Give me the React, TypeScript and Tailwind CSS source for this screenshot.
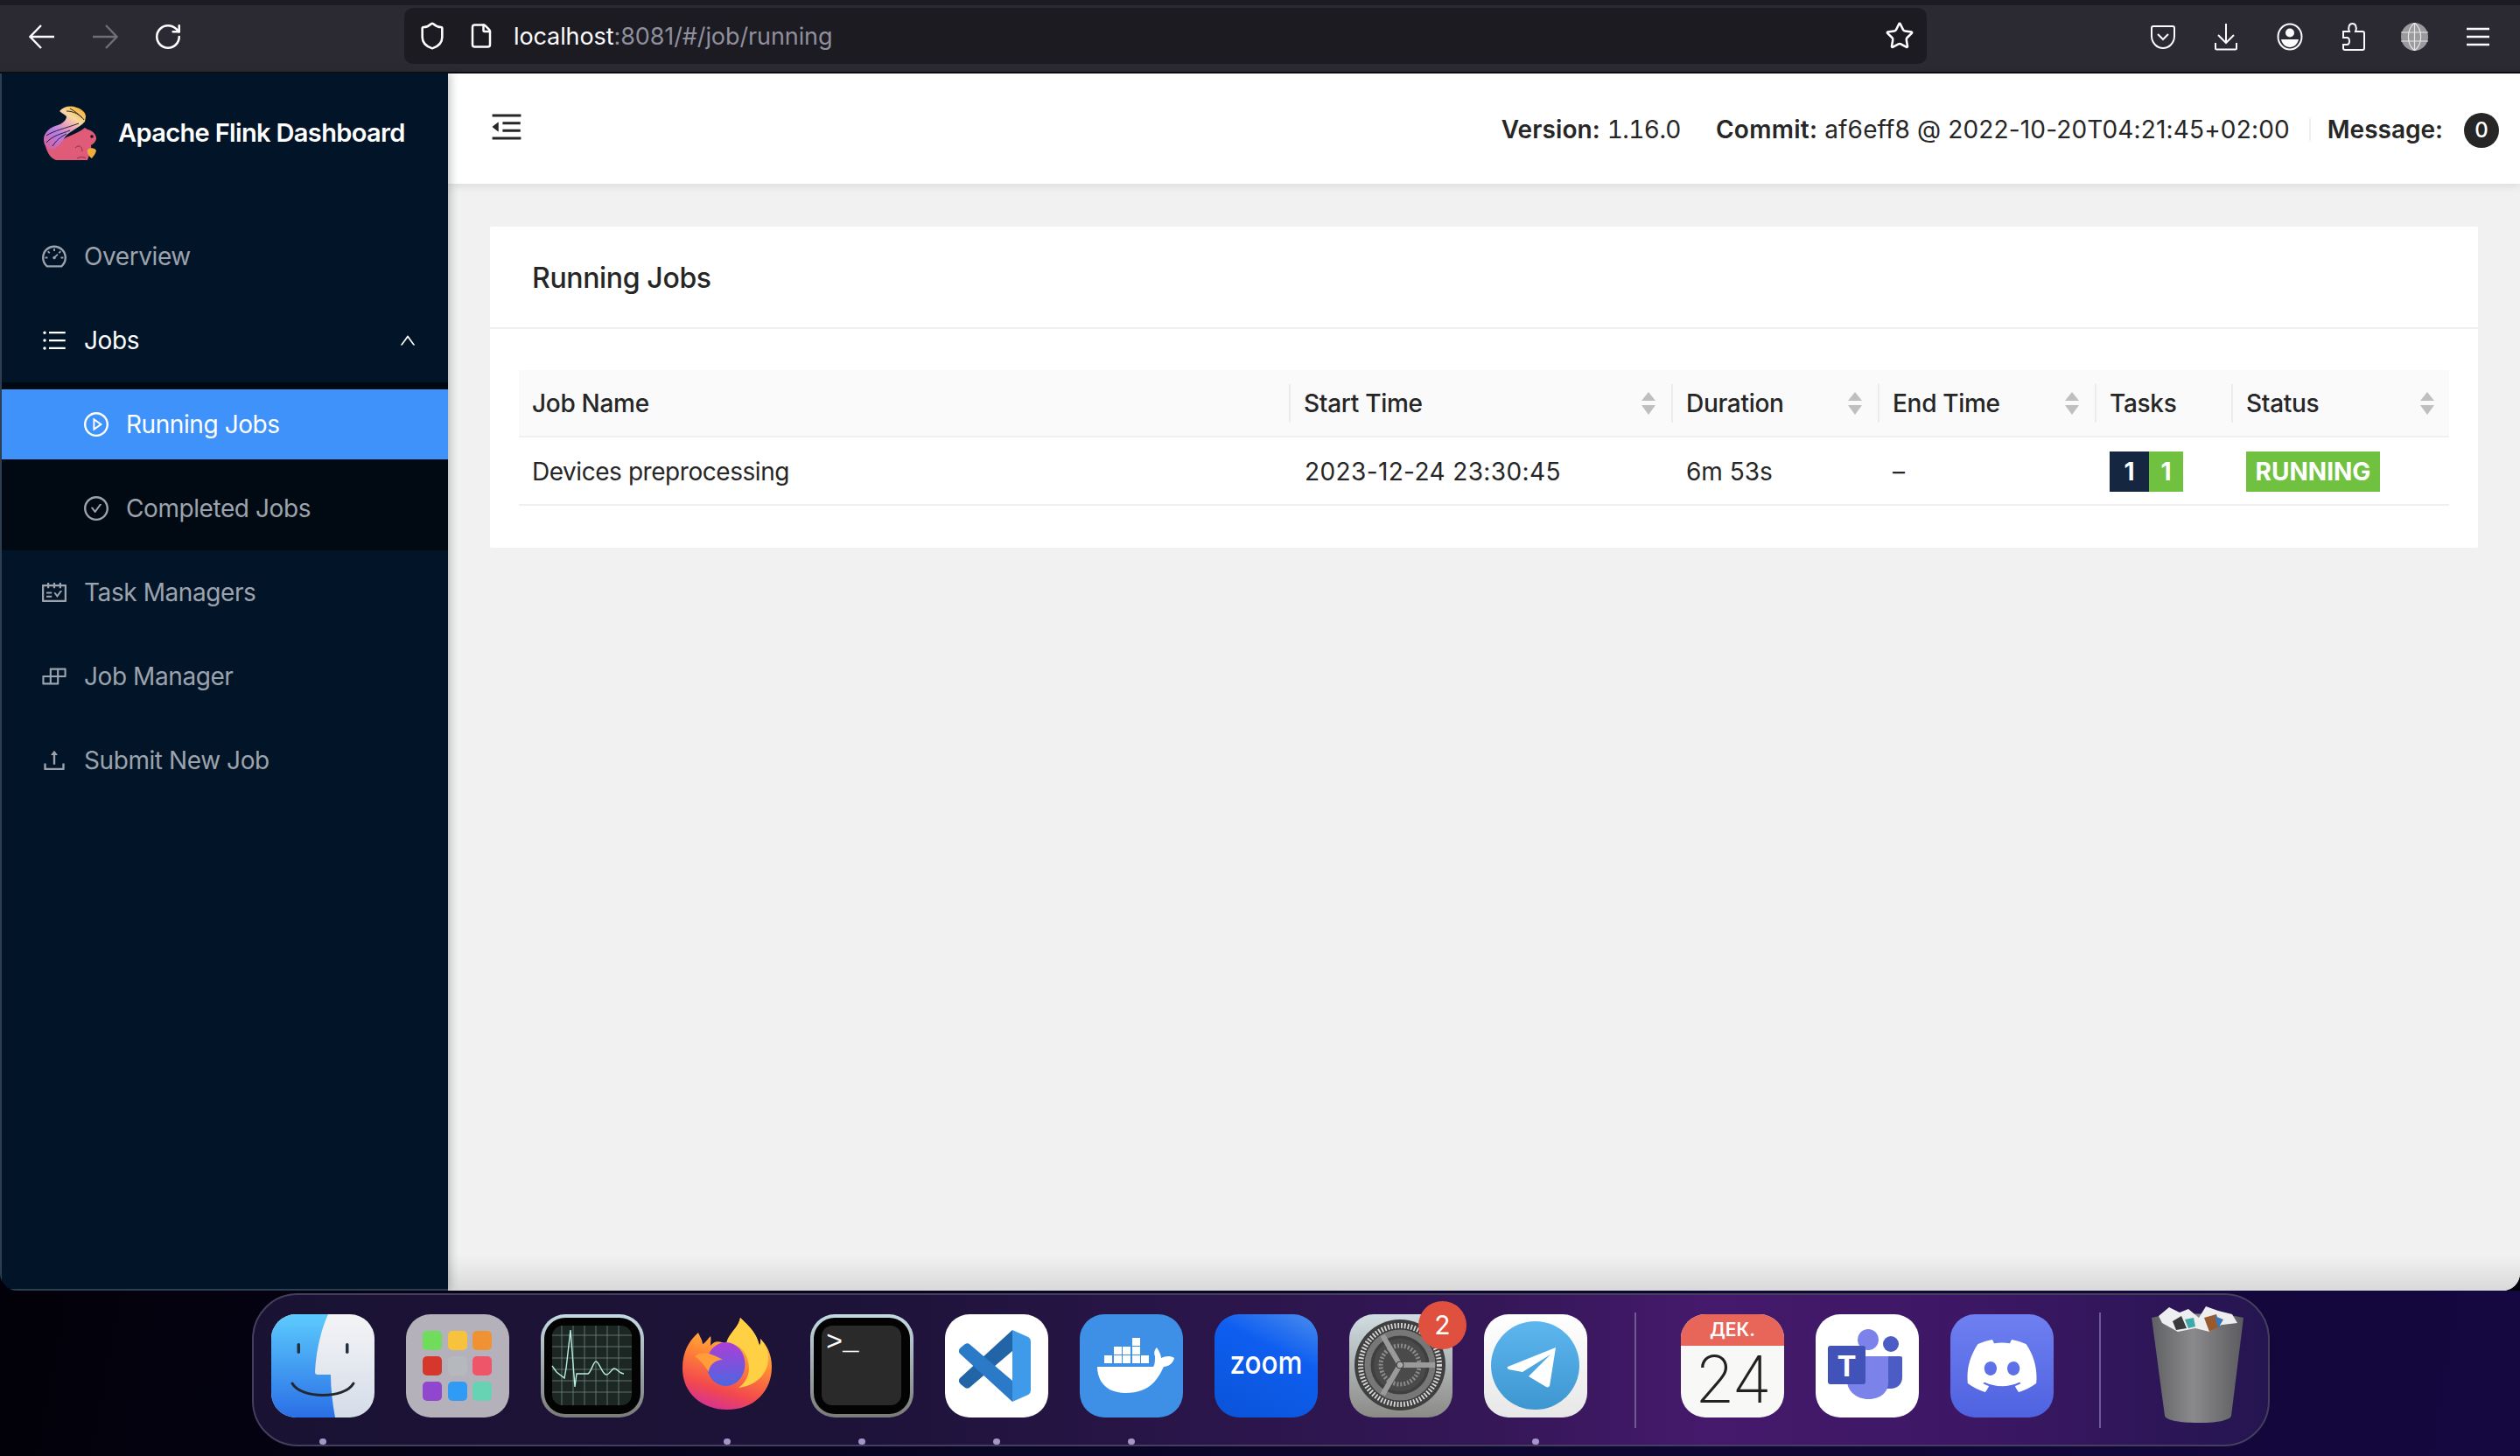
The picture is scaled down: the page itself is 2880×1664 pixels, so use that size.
import { FaDiscord } from 'react-icons/fa6'
import {
  AiOutlineBuild,
  AiOutlineCheckCircle,
  AiOutlineDashboard,
  AiOutlineMenuFold,
  AiOutlinePlayCircle,
  AiOutlineSchedule,
  AiOutlineUnorderedList,
  AiOutlineUp,
  AiOutlineUpload,
} from 'react-icons/ai'
import { File, RotateCw, Shield, Star } from 'lucide-react'

function SortArrows() {
  return (
    <svg width="16" height="26" viewBox="0 0 16 26" className="shrink-0">
      <path d="M8 0L16 10H0Z" fill="#bfbfbf" />
      <path d="M8 26L0 15H16Z" fill="#bfbfbf" />
    </svg>
  )
}

function Toolbar() {
  return (
    <div className="h-[84px] shrink-0 flex flex-col bg-[#2b2a33] border-b-2 border-[#0c0c0d]">
      <div className="h-[6px] bg-[#1c1b22]" />
      <div className="flex-1 flex items-center text-white">
        <div className="w-[462px] flex items-center pl-[33px] pb-[4px]">
          <svg width="30" height="30" viewBox="0 0 30 30" fill="none" stroke="#fbfbfe" strokeWidth="2.4">
            <path d="M1 15H29M14 2L1.5 15L14 28" />
          </svg>
          <svg width="30" height="30" viewBox="0 0 30 30" fill="none" stroke="#6f6e75" strokeWidth="2.4" className="ml-[42px]">
            <path d="M1 15H29M16 2L28.5 15L16 28" />
          </svg>
          <RotateCw size={34} strokeWidth={1.8} className="ml-[40px]" />
        </div>
        <div className="w-[1740px] h-[64px] -mt-[6px] rounded-[10px] bg-[#1c1b22] flex items-center pl-[15px] pr-[14px]">
          <Shield size={34} strokeWidth={1.8} />
          <File size={30} strokeWidth={2} className="ml-[24px]" />
          <div className="ml-[22px] pt-[3px] flex-1 text-[27px] tracking-[-0.1px]">
            <span className="text-[#fbfbfe]">localhost</span>
            <span className="text-[#8f8f9d]">:8081/#/job/running</span>
          </div>
          <Star size={34} strokeWidth={1.8} />
        </div>
        <div className="flex-1 flex items-center pl-[256px] pb-[4px]">
          <svg width="28" height="28" viewBox="0 0 28 28" fill="none" stroke="#fbfbfe" strokeWidth="2">
            <path d="M3 2H25a2 2 0 0 1 2 2V13C27 21 21 27 14 27S1 21 1 13V4A2 2 0 0 1 3 2Z" />
            <path d="M8 11L14 17L20 11" />
          </svg>
          <svg width="28" height="32" viewBox="0 0 28 32" fill="none" stroke="#fbfbfe" strokeWidth="2" className="ml-[44px]">
            <path d="M14 1V23M5 14L14 23L23 14M2 23V29a1.5 1.5 0 0 0 1.5 1.5H24.500a1.500 1.500 0 0 0 1.500-1.500V23" />
          </svg>
          <svg width="30" height="32" viewBox="0 0 30 32" className="ml-[44px]">
            <ellipse cx="15" cy="16" rx="13.500" ry="14.500" fill="none" stroke="#fbfbfe" strokeWidth="2" />
            <circle cx="15" cy="11.500" r="5" fill="#fbfbfe" />
            <path d="M5 19H25C24 24 20 28 15 28S6 24 5 19Z" fill="#fbfbfe" />
          </svg>
          <svg width="27" height="32" viewBox="0 0 27 32" fill="none" stroke="#fbfbfe" strokeWidth="2" className="ml-[44px]">
            <path d="M2 10H9C7 5 9 1 12.500 1S18 5 16 10H24a2 2 0 0 1 2 2V29a2 2 0 0 1-2 2H4a2 2 0 0 1-2-2V25H6C10 25 10 17 6 17H2Z" />
          </svg>
          <svg width="31" height="32" viewBox="0 0 31 32" className="ml-[41px]">
            <ellipse cx="15.500" cy="16" rx="15.500" ry="16" fill="#9a9a9e" />
            <path d="M0 11H31M0 21H31M15.500 0V32M15.500 0C6 8 6 24 15.500 32M15.500 0C25 8 25 24 15.500 32" fill="none" stroke="#e6e6e6" strokeWidth="1.200" />
          </svg>
          <svg width="26" height="22" viewBox="0 0 26 22" fill="none" stroke="#fbfbfe" strokeWidth="2.400" className="ml-[44px]">
            <path d="M0 2H26M0 11H26M0 20H26" />
          </svg>
        </div>
      </div>
    </div>
  )
}

function NavItem({ icon, label, sub, active, light, chevron }: { icon: React.ReactNode; label: string; sub?: boolean; active?: boolean; light?: boolean; chevron?: boolean }) {
  return (
    <div
      className={
        'h-[80px] flex items-center gap-[20px] text-[28px] tracking-[-0.42px] ' +
        (sub ? 'pl-[94px] ' : 'pl-[46px] ') +
        (active ? 'bg-[#3e92f9] text-white' : light ? 'text-white' : 'text-[#9ca3ad]')
      }
    >
      <span className="w-[28px] flex justify-center text-[32px] [&>svg]:shrink-0">{icon}</span>
      <span className="flex-1">{label}</span>
      {chevron && <AiOutlineUp size={22} className="mr-[35px]" />}
    </div>
  )
}

function Squirrel() {
  return (
    <svg width="60" height="62" viewBox="0 0 60 62">
      <defs>
        <linearGradient id="sqTail" x1="0.800" y1="0" x2="0.100" y2="1">
          <stop offset="0" stopColor="#f6b436" />
          <stop offset="0.220" stopColor="#f7d8a0" />
          <stop offset="0.420" stopColor="#e9a0c0" />
          <stop offset="0.650" stopColor="#b57be6" />
          <stop offset="1" stopColor="#d8609a" />
        </linearGradient>
      </defs>
      <path d="M47 25L50 27C56 28 60 33 60 37C60 41 56 44 54 45C55 50 52 56 50 62H14C8 60 4 54 2 46C8 48 14 46 18 42C24 34 36 34 47 25Z" fill="#e05b77" />
      <path d="M18 6C22 1 30-1 38 2C44 4 48 8 48 12L47 18C40 26 30 28 24 36C20 42 16 48 10 50C4 50 0 46 0 38C0 30 8 24 16 22C22 20 26 16 26 12C24 10 20 8 18 6Z" fill="url(#sqTail)" />
      <path d="M3 34C12 28 24 26 40 20M3 42C10 34 20 32 30 28M26 6C34 6 42 10 46 16M30 3C36 6 40 10 44 14M10 46C14 40 18 36 26 32" stroke="#12131f" strokeWidth="0.900" fill="none" />
      <path d="M36 48C40 44 44 46 44 52M38 60C42 58 46 58 48 60" stroke="#8a2d4a" strokeWidth="1" fill="none" />
      <circle cx="55" cy="35" r="1.800" fill="#21131f" />
      <path d="M50 50C53 47 59 48 60 51C59 56 56 58 55 60C52 58 49 54 50 50Z" fill="#f0ae3c" />
    </svg>
  )
}

function Sidebar() {
  return (
    <aside className="w-[512px] shrink-0 flex flex-col bg-[#021427] border-l-2 border-b-2 border-[#2c3e50] shadow-[2px_0_10px_rgba(29,35,41,0.3)] z-10">
      <div className="h-[128px] flex items-center pl-[48px] pt-[8px] gap-[26px]">
        <Squirrel />
        <span className="text-[29px] font-semibold text-white -ml-[1px] tracking-[-0.65px]">Apache Flink Dashboard</span>
      </div>
      <nav className="pt-[41px] flex flex-col">
        <NavItem icon={<AiOutlineDashboard />} label="Overview" />
        <div className="h-[16px]" />
        <NavItem icon={<AiOutlineUnorderedList />} label="Jobs" light chevron />
        <div className="mt-[8px] py-[8px] bg-[#010a13] flex flex-col gap-[16px]">
          <NavItem icon={<AiOutlinePlayCircle />} label="Running Jobs" sub active />
          <NavItem icon={<AiOutlineCheckCircle />} label="Completed Jobs" sub />
        </div>
        <div className="mt-[8px] flex flex-col gap-[16px]">
          <NavItem icon={<AiOutlineSchedule />} label="Task Managers" />
          <NavItem icon={<AiOutlineBuild />} label="Job Manager" />
          <NavItem icon={<AiOutlineUpload />} label="Submit New Job" />
        </div>
      </nav>
    </aside>
  )
}

function Header() {
  return (
    <header className="h-[126px] shrink-0 bg-white shadow-[0_2px_10px_rgba(0,0,0,0.1)] z-[5] flex items-center pl-[46px] pr-[24px] text-[28px] text-[#262626]">
      <AiOutlineMenuFold size={42} className="mb-[4px]" />
      <div className="flex-1" />
      <div className="flex items-center pt-[2px]">
        <b className="font-semibold tracking-[0.1px]">Version:</b>
        <span className="ml-[8px] tabular-nums tracking-[-0.6px]">1.16.0</span>
        <b className="font-semibold tracking-[0.3px] ml-[40px]">Commit:</b>
        <span className="ml-[8px] tracking-[0.15px]">af6eff8 @ 2022-10-20T04:21:45+02:00</span>
        <div className="w-[2px] h-[26px] bg-[#f0f0f0] ml-[22px] mr-[19px]" />
        <b className="font-semibold">Message:</b>
        <span className="ml-[24px] mt-[2px] w-[40px] h-[40px] rounded-full bg-[#262626] text-white flex items-center justify-center text-[24px] font-medium">0</span>
      </div>
    </header>
  )
}

function HeadCell({ label, sort, first }: { label: string; sort?: boolean; first?: boolean }) {
  return (
    <div className="flex items-center h-[44px]">
      {!first && <div className="w-[2px] h-[44px] bg-[#ececec]" />}
      <span className="flex-1 text-[28px] font-medium tracking-[-0.3px] text-[#262626] pl-[15px]">{label}</span>
      {sort && <span className="pr-[18px]"><SortArrows /></span>}
    </div>
  )
}

function JobsTable() {
  return (
    <div className="mx-[33px] mt-[47px]">
      <div className="grid grid-cols-[880px_437px_236px_248px_156px_250px] items-center h-[77px] bg-[#fafafa] border-b-2 border-[#f0f0f0]">
        <HeadCell label="Job Name" first />
        <HeadCell label="Start Time" sort />
        <HeadCell label="Duration" sort />
        <HeadCell label="End Time" sort />
        <HeadCell label="Tasks" />
        <HeadCell label="Status" sort />
      </div>
      <div className="grid grid-cols-[880px_437px_236px_248px_156px_250px] items-center h-[78px] pt-[1px] border-b-2 border-[#f0f0f0] text-[28px] text-[#262626]">
        <div className="pl-[15px] tracking-[-0.45px]">Devices preprocessing</div>
        <div className="pl-[18px] tracking-[0.38px]">2023-12-24 23:30:45</div>
        <div className="pl-[17px]">6m 53s</div>
        <div className="pl-[17px]">–</div>
        <div className="pl-[17px] flex font-bold text-white h-[46px] leading-[46px] text-center">
          <span className="w-[45px] bg-[#152640]">1</span>
          <span className="w-[39px] bg-[#71c140]">1</span>
        </div>
        <div className="pl-[17px]">
          <span className="block w-[153px] h-[46px] leading-[46px] text-center bg-[#71c140] font-bold text-white text-[28px]">RUNNING</span>
        </div>
      </div>
    </div>
  )
}

function Main() {
  return (
    <main className="flex-1 min-w-0 flex flex-col bg-[#f1f1f1]">
      <Header />
      <div className="flex-1 px-[48px] pt-[49px]">
        <section className="h-[367px] bg-white rounded-[2px]">
          <div className="h-[117px] pl-[48px] pt-[2px] flex items-center border-b-2 border-[#f0f0f0] text-[32px] tracking-[-0.35px] font-medium text-[#262626]">
            Running Jobs
          </div>
          <JobsTable />
        </section>
      </div>
      <div className="h-[40px] bg-gradient-to-b from-[#f1f1f1] to-[#d9d9d9]" />
    </main>
  )
}

function Tile({ children, dot, badge }: { children: React.ReactNode; dot?: boolean; badge?: string }) {
  return (
    <div className="relative w-[118px] shrink-0 flex flex-col items-center">
      {children}
      {badge && (
        <span className="absolute left-[79px] -top-[15px] w-[55px] h-[55px] rounded-full bg-[#e0503f] text-white text-[30px] flex items-center justify-center">{badge}</span>
      )}
      <span className={'mt-[24px] w-[8px] h-[7px] rounded-full ' + (dot ? 'bg-[#a595c9]' : 'bg-transparent')} />
    </div>
  )
}

function Finder() {
  return (
    <svg width="118" height="118" viewBox="0 0 118 118">
      <defs>
        <linearGradient id="fdL" x1="0" y1="0" x2="0" y2="1"><stop offset="0" stopColor="#5ccbfd" /><stop offset="1" stopColor="#2a6fe6" /></linearGradient>
        <linearGradient id="fdR" x1="0" y1="0" x2="0" y2="1"><stop offset="0" stopColor="#f4f4f6" /><stop offset="1" stopColor="#d4dce8" /></linearGradient>
        <clipPath id="fdC"><rect width="118" height="118" rx="28" /></clipPath>
      </defs>
      <g clipPath="url(#fdC)">
        <rect width="118" height="118" fill="url(#fdR)" />
        <path d="M0 0H65C56 20 51 44 50 66C50 68 51 69 53 69H68C68 85 70 102 73 118H0Z" fill="url(#fdL)" />
      </g>
      <rect x="29.500" y="33" width="3.500" height="12" rx="1.700" fill="#20303f" />
      <rect x="85" y="33" width="3.500" height="12" rx="1.700" fill="#20303f" />
      <path d="M24 79C34 97 84 97 94 79" fill="none" stroke="#23272e" strokeWidth="3" strokeLinecap="round" />
    </svg>
  )
}

function Launchpad() {
  const tiles = ['#6fdc5c', '#f8c33c', '#ef9233', '#d5372c', '#b5b9bd', '#ee5568', '#9146cf', '#2f9bf4', '#67d3b3']
  return (
    <div className="w-[118px] h-[118px] rounded-[28px] bg-[#b5b1bb] grid grid-cols-3 gap-x-[6px] gap-y-[7px] p-[19px]">
      {tiles.map((c, i) => (
        <svg key={i} width="22" height="22" viewBox="0 0 22 22"><rect width="22" height="22" rx="5" fill={c} /></svg>
      ))}
    </div>
  )
}

function Monitor() {
  const lines = [24, 37, 50, 63, 76, 89]
  return (
    <svg width="118" height="118" viewBox="0 0 118 118">
      <defs>
        <linearGradient id="amE" x1="0" y1="0" x2="0" y2="1"><stop offset="0" stopColor="#c4dbe4" /><stop offset="1" stopColor="#7b7b78" /></linearGradient>
      </defs>
      <rect width="118" height="118" rx="28" fill="url(#amE)" />
      <rect x="4" y="4" width="110" height="110" rx="24" fill="#030303" />
      <rect x="13" y="13" width="91" height="91" rx="12" fill="#1c2622" />
      {lines.map(v => <path key={v} d={`M${v} 13V104M13 ${v}H104`} stroke="#6f8580" strokeWidth="0.800" fill="none" />)}
      <path d="M13 59L18 66L27 73L29 62L34 18L39 83L41 68H54C58 66 60 54 63 54C67 54 70 69 75 69C79 69 81 62 84 62C88 62 89 68 95 68" fill="none" stroke="#b9eee0" strokeWidth="1.400" />
    </svg>
  )
}

function Firefox() {
  return (
    <svg width="118" height="118" viewBox="0 0 118 118">
      <defs>
        <linearGradient id="ffB" x1="0.700" y1="0" x2="0.400" y2="1">
          <stop offset="0" stopColor="#ffdf4f" /><stop offset="0.450" stopColor="#ff8a35" /><stop offset="0.800" stopColor="#f2484e" /><stop offset="1" stopColor="#d8338f" />
        </linearGradient>
        <linearGradient id="ffG" x1="0.500" y1="0" x2="0.500" y2="1">
          <stop offset="0" stopColor="#ac3fd8" /><stop offset="1" stopColor="#4c66e0" />
        </linearGradient>
      </defs>
      <rect width="118" height="118" rx="28" fill="#1d1336" />
      <path d="M74 4C72 16 60 22 58 34C50 30 44 30 40 36C40 32 41 28 40 25C37 28 34 33 31 34C31 30 28 26 26 21C16 30 8 42 8 62C8 90 30 109 59 109C90 109 110 88 110 60C110 45 104 35 97 28C98 33 96 36 96 36C92 20 84 14 74 4Z" fill="url(#ffB)" />
      <path d="M74 4C72 16 60 22 58 34C72 32 84 44 84 62C84 72 78 80 72 84C90 82 106 70 106 50C106 40 102 34 97 28C98 33 96 36 96 36C92 20 84 14 74 4Z" fill="#ffcf44" />
      <ellipse cx="57.500" cy="57" rx="22" ry="25" fill="url(#ffG)" />
      <path d="M22 48C30 42 40 44 54 52C46 52 38 58 38 66C34 60 30 54 22 48Z" fill="#ff9d3a" />
    </svg>
  )
}

function Terminal() {
  return (
    <svg width="118" height="118" viewBox="0 0 118 118">
      <defs>
        <linearGradient id="tmE" x1="0" y1="0" x2="0" y2="1"><stop offset="0" stopColor="#c4dbe4" /><stop offset="1" stopColor="#7b7b78" /></linearGradient>
      </defs>
      <rect width="118" height="118" rx="28" fill="url(#tmE)" />
      <rect x="4" y="4" width="110" height="110" rx="24" fill="#030303" />
      <rect x="13" y="13" width="91" height="91" rx="12" fill="#2a2a2a" />
      <text x="18" y="41" fill="#fff" fontSize="32" fontFamily="Liberation Mono, monospace">{'>'}</text>
      <text x="37" y="40" fill="#fff" fontSize="31" fontWeight="700" fontFamily="Liberation Mono, monospace">_</text>
    </svg>
  )
}

function VsCode() {
  return (
    <svg width="118" height="118" viewBox="0 0 118 118">
      <rect width="118" height="118" rx="28" fill="#fff" />
      <path d="M77 18L17 73C15 76 16 78 18 80L23 84C25 85 27 85 29 83L77 42Z" fill="#2265a6" />
      <path d="M17 45C15 42 16 40 18 38L23 34C25 33 27 33 29 35L77 76V100Z" fill="#2a7ac8" />
      <path d="M77 18L95 26C97 27 98 29 98 32V86C98 89 97 91 95 92L77 100Z" fill="#3f9aea" />
    </svg>
  )
}

function Docker() {
  const boxes = [[28, 47], [39, 47], [49, 47], [60, 47], [70, 47], [39, 37], [49, 37], [60, 37], [60, 27]]
  return (
    <svg width="118" height="118" viewBox="0 0 118 118">
      <rect width="118" height="118" rx="28" fill="#3e8fe6" />
      {boxes.map(([x, y]) => <rect key={`${x}-${y}`} x={x} y={y} width="9" height="9" fill="#fff" />)}
      <path d="M20 60H84C86 58 86 52 86 48C84 44 86 40 88 38C91 42 93 47 93 50C98 48 103 47 108 50C107 56 101 60 96 60C90 72 82 90 52 90C30 90 20 76 20 60Z" fill="#fff" />
    </svg>
  )
}

function Zoom() {
  return (
    <svg width="118" height="118" viewBox="0 0 118 118">
      <defs>
        <linearGradient id="zmB" x1="0.800" y1="0" x2="0.300" y2="1">
          <stop offset="0" stopColor="#3f84ee" /><stop offset="0.350" stopColor="#0f5ef0" /><stop offset="1" stopColor="#0b55dc" />
        </linearGradient>
      </defs>
      <rect width="118" height="118" rx="28" fill="url(#zmB)" />
      <text x="59" y="68" textAnchor="middle" fill="#fff" fontSize="36" fontWeight="500" textLength="83" lengthAdjust="spacingAndGlyphs" fontFamily="Inter, sans-serif">zoom</text>
    </svg>
  )
}

function Settings() {
  return (
    <svg width="118" height="118" viewBox="0 0 118 118">
      <defs>
        <linearGradient id="stB" x1="0" y1="0" x2="0" y2="1"><stop offset="0" stopColor="#d0dde2" /><stop offset="1" stopColor="#8b8a87" /></linearGradient>
      </defs>
      <rect width="118" height="118" rx="28" fill="url(#stB)" />
      <circle cx="58" cy="58" r="52" fill="#3f3f3f" />
      <circle cx="58" cy="58" r="45" fill="none" stroke="#d8d8d8" strokeWidth="6" strokeDasharray="1.800 2" />
      <circle cx="58" cy="58" r="37" fill="none" stroke="#777" strokeWidth="7" />
      <circle cx="58" cy="58" r="30" fill="#4a4a4a" />
      <circle cx="58" cy="58" r="22" fill="none" stroke="#8c8c8c" strokeWidth="5" strokeDasharray="2 2" />
      <path d="M58 58L38 24M58 58H98M58 58L38 92" stroke="#9a9a9a" strokeWidth="6" fill="none" />
      <circle cx="58" cy="58" r="4" fill="#aaa" stroke="#333" />
    </svg>
  )
}

function Telegram() {
  return (
    <svg width="118" height="118" viewBox="0 0 118 118">
      <defs>
        <linearGradient id="tgB" x1="0" y1="0" x2="0" y2="1"><stop offset="0" stopColor="#ffffff" /><stop offset="1" stopColor="#e7e7e7" /></linearGradient>
        <linearGradient id="tgC" x1="0" y1="0" x2="0" y2="1"><stop offset="0" stopColor="#5eb6ef" /><stop offset="1" stopColor="#3e96d1" /></linearGradient>
      </defs>
      <rect width="118" height="118" rx="28" fill="url(#tgB)" />
      <circle cx="58.500" cy="58.500" r="50.500" fill="url(#tgC)" />
      <path d="M82 38L27 60C26 61 27 62 28 63L44 66L76 46L51 71L71 83C73 84 74 83 75 82Z" fill="#fff" />
    </svg>
  )
}

function Calendar() {
  return (
    <div className="w-[118px] h-[118px] rounded-[28px] flex flex-col bg-[#f8f8f6]">
      <div className="h-[36px] rounded-t-[28px] bg-[#e8655a] text-white text-[21px] font-semibold flex items-center justify-center">ДЕК.</div>
      <div className="h-[76px] flex items-center justify-center text-[#222] text-[74px] leading-[76px] font-extralight tracking-[-2px]">24</div>
    </div>
  )
}

function Teams() {
  return (
    <svg width="118" height="118" viewBox="0 0 118 118">
      <rect width="118" height="118" rx="28" fill="#fff" />
      <circle cx="86" cy="34" r="9" fill="#4b5cc4" />
      <path d="M79 48H97a2 2 0 0 1 2 2V72C99 80 93 85 86 85H79Z" fill="#4b5cc4" />
      <circle cx="60" cy="29" r="12" fill="#7b83eb" />
      <path d="M36 48H83V78C83 90 73 97 60 97S36 88 36 76Z" fill="#7b83eb" />
      <rect x="14" y="36" width="43" height="44" rx="3" fill="#4152b8" />
      <text x="35.500" y="71" textAnchor="middle" fill="#fff" fontSize="33" fontWeight="700" fontFamily="Inter, sans-serif">T</text>
    </svg>
  )
}

function Discord() {
  return (
    <div className="w-[118px] h-[118px] rounded-[28px] bg-gradient-to-b from-[#6e80f1] to-[#4f62e0] flex items-center justify-center text-white">
      <FaDiscord size={86} />
    </div>
  )
}

function Trash() {
  return (
    <svg width="105" height="134" viewBox="0 0 105 134">
      <defs>
        <linearGradient id="trB" x1="0" y1="0" x2="1" y2="0">
          <stop offset="0" stopColor="#5f6063" /><stop offset="0.450" stopColor="#8a8a8c" /><stop offset="1" stopColor="#5c5c60" />
        </linearGradient>
      </defs>
      <path d="M0 14C20 8 85 8 105 14L91 126C90 131 75 134 53 134S16 131 15 126Z" fill="url(#trB)" />
      <path d="M8 12L20 2L32 8L42 4L54 14L62 1L76 6L92 10L98 20L80 22L66 30L50 26L30 30L12 20Z" fill="#eceef0" />
      <path d="M24 18L34 12L40 26L28 28Z" fill="#3a3a3a" />
      <path d="M38 16L48 14L50 24L42 26Z" fill="#3fa8a8" />
      <path d="M60 14L74 10L78 24L66 30Z" fill="#9a5a30" />
      <path d="M72 12L82 16L76 26Z" fill="#3878b8" />
    </svg>
  )
}

function Dock() {
  return (
    <div className="flex-1 bg-[linear-gradient(100deg,#020109_0%,#07041e_30%,#0d0630_60%,#150740_100%)] pt-[3px] pl-[288px]">
      <div className="w-[2306px] h-[175px] rounded-[52px] border-2 border-[#453f5e] bg-[linear-gradient(90deg,#1a1233_0%,#1d1339_30%,#351758_62%,#45196c_72%,#3c1764_86%,#241550_100%)] flex items-start pl-[20px] pt-[22px]">
        <div className="flex gap-[36px]">
          <Tile dot><Finder /></Tile>
          <Tile><Launchpad /></Tile>
          <Tile><Monitor /></Tile>
          <Tile dot><Firefox /></Tile>
          <Tile dot><Terminal /></Tile>
          <Tile dot><VsCode /></Tile>
          <Tile dot><Docker /></Tile>
          <Tile><Zoom /></Tile>
          <Tile badge="2"><Settings /></Tile>
          <Tile dot><Telegram /></Tile>
        </div>
        <div className="w-[2px] h-[132px] -mt-[2px] ml-[54px] mr-[51px] bg-[#6f5a96]" />
        <div className="flex gap-[36px]">
          <Tile><Calendar /></Tile>
          <Tile><Teams /></Tile>
          <Tile><Discord /></Tile>
        </div>
        <div className="w-[2px] h-[132px] -mt-[2px] ml-[52px] mr-[58px] bg-[#6f5a96]" />
        <div className="-mt-[10px]"><Trash /></div>
      </div>
    </div>
  )
}

export default function App() {
  return (
    <div className="w-[2880px] h-[1664px] flex flex-col overflow-hidden bg-[#020109] font-['Inter',sans-serif]">
      <div className="h-[1475px] shrink-0 flex flex-col rounded-b-[20px] overflow-hidden">
        <Toolbar />
        <div className="flex-1 min-h-0 flex">
          <Sidebar />
          <Main />
        </div>
      </div>
      <Dock />
    </div>
  )
}
